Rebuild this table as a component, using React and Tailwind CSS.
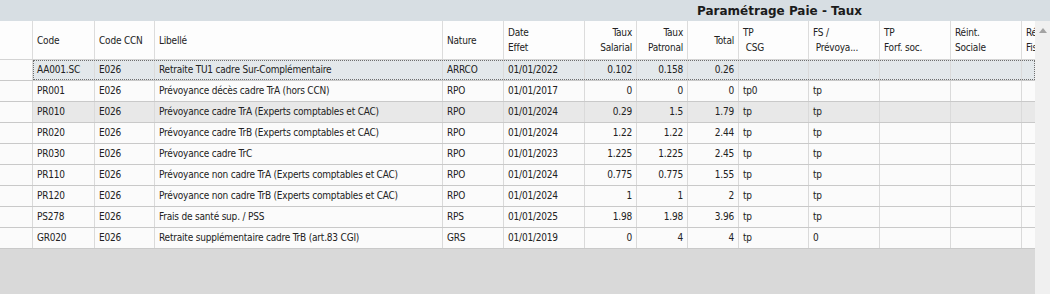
const cols = [
  { key: 'sel', w: 'w-[33px]', label: '' },
  { key: 'code', w: 'w-[62px]', label: 'Code' },
  { key: 'ccn', w: 'w-[60px]', label: 'Code CCN' },
  { key: 'lib', w: 'w-[288px]', label: 'Libellé' },
  { key: 'nat', w: 'w-[61px]', label: 'Nature' },
  { key: 'date', w: 'w-[81px]', label: 'Date\nEffet' },
  { key: 'sal', w: 'w-[52px]', label: 'Taux\nSalarial', right: true },
  { key: 'pat', w: 'w-[51px]', label: 'Taux\nPatronal', right: true },
  { key: 'tot', w: 'w-[51px]', label: 'Total', right: true },
  { key: 'csg', w: 'w-[70px]', label: 'TP\n CSG' },
  { key: 'fs', w: 'w-[71px]', label: 'FS /\n Prévoya...' },
  { key: 'forf', w: 'w-[71px]', label: 'TP\nForf. soc.' },
  { key: 'reint', w: 'w-[71px]', label: 'Réint.\nSociale' },
  { key: 'refi', w: 'w-[13px]', label: 'Réint.\nFiscale' },
];

const rows = [
  { code: 'AA001.SC', ccn: 'E026', lib: 'Retraite TU1 cadre Sur-Complémentaire', nat: 'ARRCO', date: '01/01/2022', sal: '0.102', pat: '0.158', tot: '0.26', csg: '', fs: '', selected: true },
  { code: 'PR001', ccn: 'E026', lib: 'Prévoyance décès cadre TrA (hors CCN)', nat: 'RPO', date: '01/01/2017', sal: '0', pat: '0', tot: '0', csg: 'tp0', fs: 'tp' },
  { code: 'PR010', ccn: 'E026', lib: 'Prévoyance cadre TrA (Experts comptables et CAC)', nat: 'RPO', date: '01/01/2024', sal: '0.29', pat: '1.5', tot: '1.79', csg: 'tp', fs: 'tp', hover: true },
  { code: 'PR020', ccn: 'E026', lib: 'Prévoyance cadre TrB (Experts comptables et CAC)', nat: 'RPO', date: '01/01/2024', sal: '1.22', pat: '1.22', tot: '2.44', csg: 'tp', fs: 'tp' },
  { code: 'PR030', ccn: 'E026', lib: 'Prévoyance cadre TrC', nat: 'RPO', date: '01/01/2023', sal: '1.225', pat: '1.225', tot: '2.45', csg: 'tp', fs: 'tp' },
  { code: 'PR110', ccn: 'E026', lib: 'Prévoyance non cadre TrA (Experts comptables et CAC)', nat: 'RPO', date: '01/01/2024', sal: '0.775', pat: '0.775', tot: '1.55', csg: 'tp', fs: 'tp' },
  { code: 'PR120', ccn: 'E026', lib: 'Prévoyance non cadre TrB (Experts comptables et CAC)', nat: 'RPO', date: '01/01/2024', sal: '1', pat: '1', tot: '2', csg: 'tp', fs: 'tp' },
  { code: 'PS278', ccn: 'E026', lib: 'Frais de santé sup. / PSS', nat: 'RPS', date: '01/01/2025', sal: '1.98', pat: '1.98', tot: '3.96', csg: 'tp', fs: 'tp' },
  { code: 'GR020', ccn: 'E026', lib: 'Retraite supplémentaire cadre TrB (art.83 CGI)', nat: 'GRS', date: '01/01/2019', sal: '0', pat: '4', tot: '4', csg: 'tp', fs: '0' },
];

function Row({ row }) {
  const rest = cols.slice(1);
  return (
    <div className="flex h-[21px] border-b border-[#c9c9c9]">
      <div className="w-[33px] shrink-0 border-r border-[#dadada] bg-[#fbfbfb]" />
      <div
        className={
          'flex ' +
          (row.selected
            ? 'bg-[#e3e8eb] outline-1 outline-dotted outline-[#6f6f6f] -outline-offset-1'
            : row.hover
            ? 'bg-[#e8e8e8]'
            : 'bg-[#fbfbfb]')
        }
      >
        {rest.map((c, i) => (
          <div
            key={c.key}
            className={
              c.w +
              ' shrink-0 overflow-hidden whitespace-nowrap px-[4px] leading-[20px] ' +
              (i < rest.length - 1 ? 'border-r border-[#dadada] ' : '') +
              (c.right ? 'text-right' : 'text-left')
            }
          >
            {row[c.key] || ''}
          </div>
        ))}
      </div>
    </div>
  );
}

export default function App() {
  return (
    <div className="w-[1050px] h-[294px] flex flex-col bg-[#d9d9d9] text-[#222] font-['DejaVu_Sans_Condensed','DejaVu_Sans',sans-serif] text-[10px] tracking-[-0.2px] overflow-hidden">
      <div className="h-[21px] shrink-0 bg-[#d7dee3] flex items-center pl-[697px]">
        <span className="font-['DejaVu_Sans',sans-serif] font-bold text-[12px] tracking-normal text-[#1b1b1b]">
          Paramétrage Paie - Taux
        </span>
      </div>
      <div className="flex flex-1 min-h-0">
        <div className="w-[1035px] flex flex-col">
          <div className="flex h-[39px] shrink-0 bg-[#fdfdfd] border-b border-[#d4d4d4]">
            {cols.map((c, i) => (
              <div
                key={c.key}
                className={
                  c.w +
                  ' shrink-0 overflow-hidden whitespace-pre flex items-center px-[4px] leading-[15px] ' +
                  (i < cols.length - 1 ? 'border-r border-[#dcdcdc] ' : '') +
                  (c.right ? 'justify-end text-right' : 'justify-start text-left')
                }
              >
                {c.label}
              </div>
            ))}
          </div>
          {rows.map((r) => (
            <Row key={r.code} row={r} />
          ))}
          <div className="flex-1 bg-[#d9d9d9]" />
        </div>
        <div className="w-[15px] bg-[#f0f0f0] flex justify-center pt-[7px]">
          <svg width="8" height="5" viewBox="0 0 8 5">
            <path d="M0 5 L4 0 L8 5 Z" fill="#a3a3a3" />
          </svg>
        </div>
      </div>
    </div>
  );
}
